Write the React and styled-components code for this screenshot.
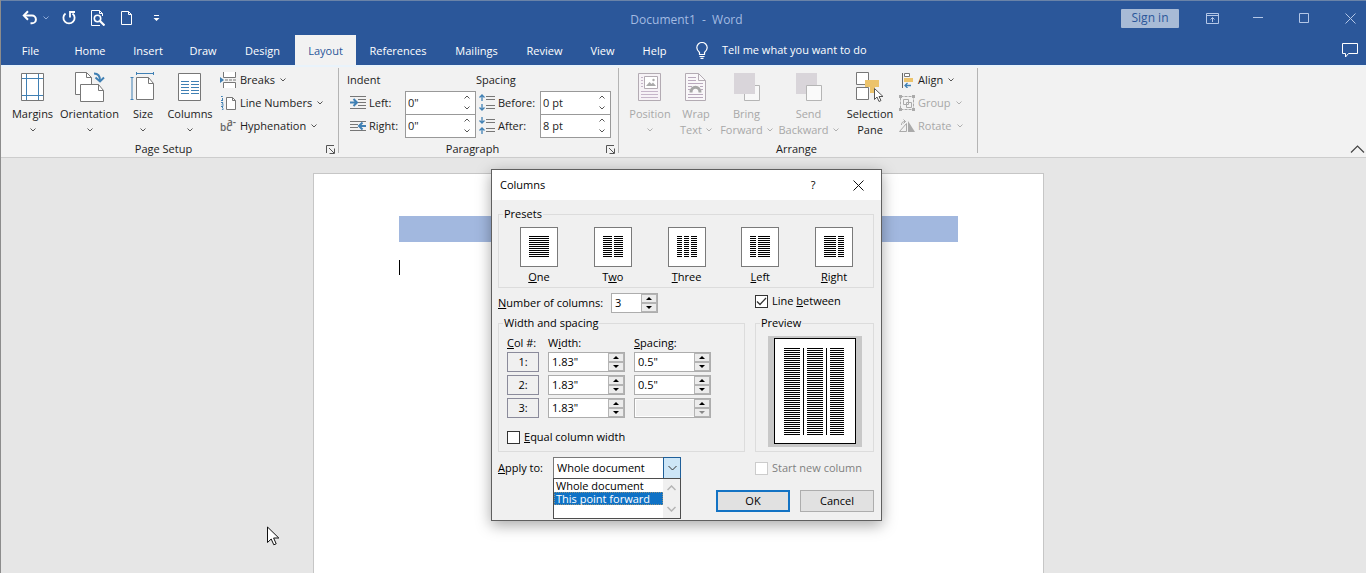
import React, { useState } from "react"
import styled, { createGlobalStyle, css } from "styled-components"

const GlobalStyle = createGlobalStyle`
  * {
    box-sizing: border-box;
  }
  body {
    margin: 0;
    overflow: hidden;
    font-family: "Open Sans", "Noto Sans", sans-serif;
    font-size: 11px;
    line-height: 16px;
    color: #1c1c1c;
  }
  button,
  input,
  select {
    font: inherit;
    color: inherit;
    margin: 0;
    padding: 0;
    border: 0;
    border-radius: 0;
    background: transparent;
  }
  svg {
    display: block;
    flex: none;
  }
`

/* ---------- icons ---------- */

const Chevron = ({ size = 6, color = "#555" }) => (
  <svg width={size} height="4" viewBox="0 0 6 4" fill="none" stroke={color}>
    <path d="M.5.5 3 3 5.5.5" />
  </svg>
)

const UndoIcon = () => (
  <svg width="16" height="16" viewBox="0 0 16 16" fill="none" stroke="#fff" strokeWidth="2">
    <path d="M2 5.500h8a3.800 3.800 0 0 1 0 7.800H8.500" />
    <path d="M6 1.200 1.800 5.500 6 9.800" />
  </svg>
)

const RedoIcon = () => (
  <svg width="16" height="16" viewBox="0 0 16 16" fill="none" stroke="#fff" strokeWidth="1.800">
    <path d="M4.500 3.500A5.600 5.600 0 1 0 11.500 3.500" />
    <path d="M9 7.500V2h5" />
  </svg>
)

const PreviewIcon = () => (
  <svg width="16" height="16" viewBox="0 0 16 16" fill="none" stroke="#fff">
    <path d="M11 15.500H2.500V.500h8l3 3V6M10.500.500v3h3" />
    <circle cx="8.500" cy="8.500" r="3.200" strokeWidth="1.600" />
    <path d="m11 11 4.500 4.500" strokeWidth="2.200" />
  </svg>
)

const NewIcon = () => (
  <svg width="16" height="16" viewBox="0 0 16 16" fill="none" stroke="#fff">
    <path d="M4.500 1.500h7l3 3v10h-10zM11.500 1.500v3h3" />
  </svg>
)

const CustomizeIcon = () => (
  <svg width="7" height="8" viewBox="0 0 7 8" fill="#fff">
    <path d="M1 1h5v1H1zM.500 4h6l-3 3z" />
  </svg>
)

const BulbIcon = () => (
  <svg width="12" height="17" viewBox="0 0 12 17" fill="none" stroke="#fff" strokeWidth="1.200">
    <path d="M3.500 12.500v-2C2 9 .800 7.800.800 5.700a5.200 5.200 0 0 1 10.400 0c0 2.100-1.200 3.300-2.700 4.800v2zM3.500 14.500h5M4.500 16.400h3" />
  </svg>
)

const CommentIcon = () => (
  <svg width="16" height="15" viewBox="0 0 16 15" fill="none" stroke="#fff">
    <path d="M.500.500h15v10H6.500l-3 3.500v-3.500h-3z" />
  </svg>
)

const RibbonIcon = () => (
  <svg width="13" height="11" viewBox="0 0 13 11" fill="none" stroke="#b4c7e7">
    <path d="M.500.500h12v10H.500zM.500 2.500h12M6.500 9V4.500M4.500 6.500l2-2 2 2" />
  </svg>
)

const WinGlyph = ({ d }) => (
  <svg width="11" height="11" viewBox="0 0 11 11" fill="none" stroke="#b4c7e7">
    <path d={d} />
  </svg>
)

const MarginsIcon = () => (
  <svg width="28" height="30" viewBox="0 0 28 30" fill="none">
    <path d="M2.500 1.500h22v27h-22z" fill="#fff" stroke="#777" />
    <path d="M7.500 2v26M19.500 2v26M3 6.500h21M3 23.500h21" stroke="#4080b4" />
  </svg>
)

const OrientationIcon = () => (
  <svg width="30" height="32" viewBox="0 0 30 32" fill="none">
    <path d="M.500.500h11l5 5v17H.500z" fill="#fff" stroke="#777" />
    <path d="M11.500.500v5h5" stroke="#777" />
    <path d="M5.500 12.500h18l5 6v11h-23z" fill="#fff" stroke="#777" />
    <path d="M23.500 12.500v6h5" stroke="#777" />
    <path d="M19 1.500c4 0 6 2 6 7" stroke="#4080b4" strokeWidth="2" />
    <path d="m20.500 5.500 4.500 4 4-4" stroke="#4080b4" strokeWidth="2" />
  </svg>
)

const SizeIcon = () => (
  <svg width="26" height="30" viewBox="0 0 26 30" fill="none">
    <path d="M6.500 5.500h12l5 6v16h-17z" fill="#fff" stroke="#777" />
    <path d="M18.500 5.500v6h5" stroke="#777" />
    <path d="M6.500 0v3M23.500 0v3M6.500 1.500h17M.500 5.500h3M.500 27.500h3M2 5.500v22" stroke="#4080b4" />
  </svg>
)

const ColumnsIcon = () => (
  <svg width="24" height="30" viewBox="0 0 24 30" fill="none">
    <path d="M.500 1.500h22v27H.500z" fill="#fff" stroke="#777" />
    <path
      d="M3 9.500h8M13 9.500h8M3 12.500h8M13 12.500h8M3 15.500h8M13 15.500h8M3 18.500h8M13 18.500h8M3 21.500h8M13 21.500h8"
      stroke="#4080b4"
    />
  </svg>
)

const BreaksIcon = () => (
  <svg width="17" height="16" viewBox="0 0 17 16" fill="none">
    <path d="M3.500 0v5.500h12V0M3.500 16v-5.500h12V16" fill="#fff" stroke="#777" />
    <path d="M5 8h3M9 8h3M13 8h3" stroke="#777" />
    <path d="m0 5 4 3-4 3z" fill="#4080b4" />
  </svg>
)

const LineNumbersIcon = () => (
  <svg width="17" height="16" viewBox="0 0 17 16" fill="none">
    <path d="M6.500 2.500h6l3 3v9h-9z" fill="#fff" stroke="#777" />
    <path d="M12.500 2.500v3h3" stroke="#777" />
    <path d="M1 1.500h1.500V5M1 5.500h3M1 7.500h2.500L1.500 10H4M1 11.500h2.500L2 13l1.500 1L1 15" stroke="#4080b4" strokeDasharray="2 1" />
  </svg>
)

const HyphenIcon = () => (
  <svg width="17" height="20" viewBox="0 0 17 20" fill="#666" fontSize="10" fontWeight="600">
    <text x="0" y="15">
      bc<tspan x="7" y="10">a-</tspan>
    </text>
  </svg>
)

const IndentIcon = ({ right }) => (
  <svg width="16" height="14" viewBox="0 0 16 14" fill="none">
    {right ? (
      <>
        <path d="M0 2.500h16M0 5.500h8M0 8.500h8M0 11.500h16" stroke="#777" />
        <path d="M9 7h7M12.500 3.500 9 7l3.500 3.500" stroke="#4080b4" strokeWidth="2" />
      </>
    ) : (
      <>
        <path d="M0 .500h16M8 3.500h8M8 6.500h8M8 9.500h8M0 12.500h16" stroke="#777" />
        <path d="M0 6.500h7M3.500 3 7 6.500 3.500 10" stroke="#4080b4" strokeWidth="2" />
      </>
    )}
  </svg>
)

const SpacingIcon = ({ after }) => (
  <svg width="16" height="17" viewBox="0 0 16 17" fill="none">
    <path d="M7 2.500h9M7 5.500h9M7 11.500h9M7 14.500h9" stroke="#777" />
    <path
      d={
        after
          ? "M3 0v6M.500 3.500 3 6l2.500-2.500M3 17v-6M.500 13.500 3 11l2.500 2.500"
          : "M3 7V1M.500 3.500 3 1l2.500 2.500M3 10v6M.500 13.500 3 16l2.500-2.500"
      }
      stroke="#4080b4"
      strokeWidth="1.300"
    />
  </svg>
)

const PositionIcon = () => (
  <svg width="24" height="30" viewBox="0 0 24 30" fill="none" stroke="#b3abb3">
    <path d="M.500 1.500h22v27H.500z" fill="#f6f2f6" />
    <path d="M6.500 4.500h13v12h-13z" fill="#fff" />
    <path d="M3 5.500h2M3 8.500h2M3 11.500h2M3 14.500h2M3 19.500h17M3 22.500h17M3 25.500h17" stroke="#c5b5c9" />
    <path d="m8 14 3.500-4 2 2 1.500-1.500L18 14z" fill="#aaa" stroke="none" />
    <circle cx="15.500" cy="8" r="1.200" fill="#aaa" stroke="none" />
  </svg>
)

const WrapIcon = () => (
  <svg width="22" height="30" viewBox="0 0 22 30" fill="none" stroke="#b3abb3">
    <path d="M.500 1.500h13l7 7v20H.500z" fill="#f9f7f9" />
    <path d="M13.500 1.500v7h7" />
    <path d="M3 5.500h8M3 8.500h8M3 11.500h15M3 14.500h4M15 14.500h3M3 17.500h2M16 17.500h2M3 22.500h15M3 25.500h15" stroke="#b9a9bd" />
    <path d="M6 20.500c0-7 9-7 9 0" stroke="#a6a6a6" strokeWidth="3" />
  </svg>
)

const StackIcon = ({ back }) => (
  <svg width="28" height="30" viewBox="0 0 28 30" fill="none">
    {!back && <path d="M11.500 13.500h15v15h-15z" fill="#f8f8f8" stroke="#b5b5b5" />}
    <path d="M1 1h21v21H1z" fill="#d9d5da" />
    {back && <path d="M11.500 13.500h15v15h-15z" fill="#fafafa" stroke="#b5b5b5" />}
  </svg>
)

const SelectionIcon = () => (
  <svg width="28" height="31" viewBox="0 0 28 31" fill="none">
    <path d="M.500.500h12v12H.500zM.500 15.500h12v12H.500z" fill="#fff" stroke="#777" />
    <path d="M9 8h14v7h-4v6h-5v-6H9z" fill="#ecc36b" />
    <path d="M18.500 16.500v11l2.500-2.500 2 4.500 2-1-2-4h4z" fill="#fff" stroke="#555" />
  </svg>
)

const AlignIcon = () => (
  <svg width="16" height="16" viewBox="0 0 16 16" fill="none">
    <path d="M3.500 1v15" stroke="#666" />
    <path d="M5.500 1.500h5v3h-5z" fill="#fff" stroke="#777" />
    <path d="M5 6h9v4H5z" fill="#ecc36b" />
    <path d="M6 13.500h6M8.500 11 6 13.500 8.500 16" stroke="#4080b4" strokeWidth="1.300" />
  </svg>
)

const GroupIcon = () => (
  <svg width="16" height="16" viewBox="0 0 16 16" fill="none" stroke="#aaa">
    <path d="M1.500 1.500h13v13h-13z" strokeDasharray="3 1" />
    <path d="M4.500 4.500h5v5h-5zM7.500 7.500h5v5h-5z" />
    <path d="M0 0h3v3H0zM13 0h3v3h-3zM0 13h3v3H0zM13 13h3v3h-3z" fill="#aaa" stroke="none" />
  </svg>
)

const RotateIcon = () => (
  <svg width="16" height="14" viewBox="0 0 16 14" fill="none" stroke="#aaa">
    <path d="M.500 12.500h7v-8z" />
    <path d="M9 13V2l7 11z" fill="#aaa" stroke="none" />
    <path d="M2.500 6c0-2.500 1-3.500 4-3.500M4.500.500l2 2-2 2" />
  </svg>
)

const LauncherIcon = () => (
  <svg width="9" height="9" viewBox="0 0 9 9" fill="none" stroke="#555">
    <path d="M.500 8V.500H8M3 3l5 5M8.500 3.500v5h-5" />
  </svg>
)

const PointerIcon = () => (
  <svg width="13" height="20" viewBox="0 0 13 20">
    <path d="M.500 1v15.500l3.700-3.500 2.600 5.800 2.400-1-2.600-5.800h5.200z" fill="#fff" stroke="#111" />
  </svg>
)

/* ---------- title bar and tabs ---------- */

const Window = styled.div`
  min-height: 100vh;
  display: flex;
  flex-direction: column;
  position: relative;
  border-left: 1px solid #8c8c8c;
  background: #e6e6e6;
`

const Header = styled.header`
  background: #2b579a;
  border-top: 1px solid #6a83a8;
`

const TitleBar = styled.div`
  height: 34px;
  display: grid;
  grid-template-columns: 1fr auto 1fr;
  align-items: center;
  padding-left: 6px;
`

const QuickAccess = styled.div`
  display: flex;
  align-items: center;
  gap: 12px;
  padding-left: 15px;
  > :last-child {
    margin-left: 8px;
  }
`

const IconButton = styled.button`
  display: flex;
  align-items: center;
  justify-content: center;
  gap: 5px;
`

const Title = styled.div`
  padding-top: 4px;
  font-size: 12px;
  color: #a3bbe2;
  white-space: pre;
`

const WindowControls = styled.div`
  display: flex;
  justify-content: flex-end;
  align-items: center;
  gap: 14px;
  height: 31px;
`

const SignIn = styled.button`
  width: 58px;
  height: 19px;
  margin-right: 3px;
  border-radius: 1px;
  background: #a8bbd6;
  color: #2b579a;
  font-size: 12px;
`

const WindowButton = styled(IconButton)`
  width: 32px;
  height: 31px;
`

const TabBar = styled.nav`
  height: 30px;
  display: flex;
  align-items: stretch;
  padding-right: 8px;
`

const Tab = styled.a`
  width: ${({ $width }) => $width}px;
  display: flex;
  align-items: center;
  justify-content: center;
  padding-top: 1px;
  text-decoration: none;
  color: ${({ $active }) => ($active ? "#2b579a" : "#fff")};
  background: ${({ $active }) => ($active ? "#f2f2f2" : "transparent")};
`

const TellMe = styled(IconButton)`
  gap: 14px;
  margin-left: 16px;
  color: #fff;
`

const CommentButton = styled(IconButton)`
  margin-left: auto;
`

/* ---------- ribbon ---------- */

const Ribbon = styled.section`
  display: flex;
  height: 93px;
  border-top: 2px solid #e9f3fb;
  border-bottom: 1px solid #cdcdcd;
  background: #f2f2f2;
`

const Group = styled.div`
  display: grid;
  grid-template-rows: minmax(0, 1fr) 8px;
  margin: 1px 0 4px;
  padding-left: ${({ $pad }) => $pad}px;
  width: ${({ $width }) => $width}px;
  border-right: 1px solid #b4b4b4;
`

const GroupBody = styled.div`
  display: flex;
  align-items: flex-start;
`

const GroupFooter = styled.div`
  align-self: center;
  display: flex;
  align-items: center;
  padding-right: 3px;
  margin-left: -${({ $pad }) => $pad}px;
`

const GroupName = styled.span`
  flex: 1;
  text-align: center;
`

const BigButton = styled.button`
  width: ${({ $width }) => $width}px;
  height: 71px;
  display: flex;
  flex-direction: column;
  align-items: center;
  color: ${({ disabled }) => (disabled ? "#a8a8a8" : "#1c1c1c")};
  white-space: nowrap;
`

const BigIcon = styled.span`
  height: 36px;
  padding-top: 4px;
  margin-bottom: 2px;
`

const SecondLine = styled.span`
  display: flex;
  align-items: center;
  gap: 4px;
  height: 16px;
`

const SmallList = styled.div`
  display: flex;
  flex-direction: column;
  padding-left: ${({ $pad }) => $pad}px;
`

const SmallButton = styled.button`
  display: flex;
  align-items: center;
  gap: 3px;
  height: 23px;
  color: ${({ disabled }) => (disabled ? "#a8a8a8" : "#1c1c1c")};
  white-space: nowrap;
  svg:last-child {
    margin-left: 2px;
  }
`

const FieldColumn = styled.div`
  display: flex;
  flex-direction: column;
`

const FieldHeading = styled.div`
  height: 23px;
  padding-top: 4px;
`

const Field = styled.div`
  display: flex;
  align-items: center;
  gap: 3px;
  height: 23px;
  padding-left: 3px;
`

const FieldLabel = styled.label`
  width: ${({ $width }) => $width}px;
  white-space: nowrap;
`

const RibbonSpin = styled.div`
  display: flex;
  width: 71px;
  height: 24px;
  border: 1px solid #999;
  background: #fff;
  input {
    flex: 1;
    min-width: 0;
    padding-left: 2px;
  }
`

const RibbonArrows = styled.div`
  display: flex;
  flex-direction: column;
  width: 16px;
  button {
    flex: 1;
    display: flex;
    align-items: center;
    justify-content: center;
  }
  button:first-child svg {
    transform: rotate(180deg);
  }
`

const Collapse = styled(IconButton)`
  margin-left: auto;
  align-self: flex-end;
  width: 17px;
  height: 17px;
`

/* ---------- document ---------- */

const Canvas = styled.main`
  flex: 1;
  display: flex;
  justify-content: center;
  padding: 15px 10px 0 0;
  overflow: hidden;
`

const Paper = styled.div`
  width: 731px;
  max-width: 100%;
  padding: 42px 85px 0;
  border: 1px solid #c6c6c6;
  border-bottom: 0;
  background: #fff;
`

const Band = styled.div`
  height: 26px;
  background: #a2b8df;
`

const Caret = styled.div`
  width: 1px;
  height: 15px;
  margin-top: 18px;
  background: #000;
`

const Pointer = styled.div`
  position: absolute;
  left: 266px;
  top: 526px;
`

/* ---------- dialog ---------- */

const Dialog = styled.div`
  position: absolute;
  top: 169px;
  left: 490px;
  width: 391px;
  border: 1px solid #5f5f5f;
  background: #f0f0f0;
  color: #000;
  box-shadow: 0 4px 14px rgba(0, 0, 0, 0.35);
`

const DialogTitle = styled.div`
  height: 30px;
  display: flex;
  align-items: center;
  padding: 0 14px 0 8px;
  background: #fff;
  button {
    width: 18px;
    height: 18px;
  }
  button:last-child {
    margin-left: 27px;
  }
`

const DialogName = styled.h1`
  margin: 0;
  flex: 1;
  font-size: 11px;
  font-weight: 400;
`

const DialogBody = styled.div`
  padding: 6px 7px 8px 6px;
`

const Box = styled.fieldset`
  margin: 0;
  min-width: 0;
  border: 1px solid #dcdcdc;
  padding: ${({ $padding }) => $padding};
  legend {
    margin-left: ${({ $indent }) => $indent}px;
    padding: 0 1px;
  }
`

const Presets = styled.div`
  display: flex;
  justify-content: space-between;
`

const Preset = styled.button`
  display: flex;
  flex-direction: column;
  align-items: center;
  gap: 2px;
  width: 38px;
`

const PresetFrame = styled.span`
  display: flex;
  align-items: center;
  justify-content: center;
  width: 38px;
  height: 40px;
  border: 1px solid #7a7a7a;
  background: #fff;
`

const Columns = styled.div`
  display: grid;
  grid-template-columns: 247px 1fr;
  column-gap: 10px;
  margin-top: ${({ $top }) => $top}px;
`

const Line = styled.div`
  display: flex;
  align-items: center;
`

const NumberLabel = styled.label`
  width: 113px;
  white-space: nowrap;
`

const Spin = styled.div`
  display: flex;
  width: ${({ $width }) => $width}px;
  height: 20px;
  border: 1px solid #adadad;
  background: #fff;
  input {
    flex: 1;
    min-width: 0;
    padding-left: 3px;
  }
  ${({ $off }) =>
    $off &&
    css`
      background: #f0f0f0;
      box-shadow: inset 0 0 0 1px #fff;
    `}
`

const Arrows = styled.div`
  display: flex;
  flex-direction: column;
  width: 16px;
  button {
    flex: 1;
    display: flex;
    align-items: center;
    justify-content: center;
    border: 1px solid #b4b4b4;
    background: #ececec;
  }
`

const ColumnGrid = styled.div`
  display: grid;
  grid-template-columns: 32px 77px 77px;
  column-gap: 9px;
  row-gap: 3px;
`

const ColumnHead = styled(ColumnGrid)`
  margin-bottom: 1px;
  white-space: nowrap;
`

const ColumnNumber = styled.div`
  height: 20px;
  border: 1px solid #8b8b9b;
  line-height: 18px;
  text-align: center;
`

const CheckLabel = styled.label`
  display: flex;
  align-items: center;
  gap: 4px;
  height: 16px;
  margin-top: ${({ $top }) => $top || 0}px;
  color: ${({ $off }) => ($off ? "#808080" : "inherit")};
  white-space: nowrap;
  input {
    appearance: none;
    flex: none;
    width: 13px;
    height: 13px;
    border: 1px solid #333;
    background: #fff;
  }
  input:disabled {
    border-color: #ccc;
  }
`

const CheckHolder = styled.span`
  display: grid;
  place-items: center;
  > * {
    grid-area: 1 / 1;
  }
  svg {
    z-index: 1;
    pointer-events: none;
  }
`

const PreviewFrame = styled.div`
  display: flex;
  justify-content: center;
  align-items: flex-start;
  width: 94px;
  height: 111px;
  padding-top: 2px;
  background: #c8c8c8;
`

const ApplyLabel = styled.label`
  width: 55px;
`

const Combo = styled.div`
  position: relative;
  display: flex;
  width: 128px;
  height: 22px;
  border: 1px solid #7a7a7a;
  background: #fff;
  select {
    appearance: none;
    flex: 1;
    min-width: 0;
    padding-left: 3px;
  }
`

const ComboArrow = styled.span`
  display: flex;
  align-items: center;
  justify-content: center;
  width: 18px;
  margin: -1px;
  border: 1px solid #1f5f99;
  background: #cde6f7;
`

const ComboList = styled.div`
  position: absolute;
  top: 20px;
  left: -1px;
  display: flex;
  width: 128px;
  height: 41px;
  border: 1px solid #4d4d4d;
  background: #fff;
  ul {
    flex: 1;
    margin: 0;
    padding: 0;
    list-style: none;
  }
`

const Option = styled.li`
  height: 13px;
  padding-left: 2px;
  line-height: 13px;
  white-space: nowrap;
  color: ${({ $selected }) => ($selected ? "#fff" : "#000")};
  background: ${({ $selected }) => ($selected ? "#0f72c6" : "transparent")};
  outline: ${({ $selected }) => ($selected ? "1px dotted #8a8f80" : "none")};
  outline-offset: -1px;
`

const ListScroll = styled.div`
  width: 17px;
  display: flex;
  flex-direction: column;
  justify-content: space-between;
  align-items: center;
  padding: 6px 0;
  background: #f0f0f0;
`

const Actions = styled.div`
  display: flex;
  justify-content: flex-end;
  gap: 10px;
  margin-top: 11px;
`

const Action = styled.button`
  width: 74px;
  height: 22px;
  border: ${({ $primary }) => ($primary ? "2px solid #1373c4" : "1px solid #adadad")};
  background: #e1e1e1;
`

/* ---------- data ---------- */

const tabs = [
  { label: "File", width: 59 },
  { label: "Home", width: 60 },
  { label: "Insert", width: 56 },
  { label: "Draw", width: 54 },
  { label: "Design", width: 65 },
  { label: "Layout", width: 61 },
  { label: "References", width: 84 },
  { label: "Mailings", width: 73 },
  { label: "Review", width: 63 },
  { label: "View", width: 53 },
  { label: "Help", width: 51 },
]

const pageSetup = [
  { label: "Margins", Icon: MarginsIcon, width: 51 },
  { label: "Orientation", Icon: OrientationIcon, width: 63 },
  { label: "Size", Icon: SizeIcon, width: 44 },
  { label: "Columns", Icon: ColumnsIcon, width: 50 },
]

const arrange = [
  { label: "Position", Icon: PositionIcon, width: 46, off: true, menu: true },
  { label: "Wrap", second: "Text", Icon: WrapIcon, width: 46, off: true, menu: true },
  { label: "Bring", second: "Forward", Icon: StackIcon, width: 55, off: true, menu: true },
  { label: "Send", second: "Backward", Icon: () => <StackIcon back />, width: 69, off: true, menu: true },
  { label: "Selection", second: "Pane", Icon: SelectionIcon, width: 54 },
]

const presets = [
  { first: "", key: "O", rest: "ne", bars: [[0, 20]] },
  { first: "T", key: "w", rest: "o", bars: [[0, 9], [11, 9]] },
  { first: "", key: "T", rest: "hree", bars: [[0, 5], [7, 5], [14, 6]] },
  { first: "", key: "L", rest: "eft", bars: [[0, 6], [8, 12]] },
  { first: "", key: "R", rest: "ight", bars: [[0, 12], [14, 6]] },
]

const rows = [
  { id: 1, width: '1.83"', spacing: '0.5"' },
  { id: 2, width: '1.83"', spacing: '0.5"' },
  { id: 3, width: '1.83"', spacing: "", off: true },
]

/* ---------- parts ---------- */

const Bars = ({ bars, lines, width, step }) => (
  <svg width={width} height={lines * step} shapeRendering="crispEdges">
    {bars.map(([x, w]) =>
      Array.from({ length: lines }, (_, i) => (
        <rect key={`${x}-${i}`} x={x} y={i * step} width={w} height="1" />
      ))
    )}
  </svg>
)

const PreviewPage = () => (
  <svg width="82" height="106" viewBox="0 0 82 106" shapeRendering="crispEdges">
    <rect x=".5" y=".5" width="81" height="105" fill="#fff" stroke="#000" />
    {[[10, 16], [33, 16], [56, 14]].map(([x, w]) =>
      Array.from({ length: 44 }, (_, i) => (
        <rect key={`${x}-${i}`} x={x} y={10 + i * 2} width={w} height="1" />
      ))
    )}
    <rect x="29" y="10" width="1" height="87" />
    <rect x="52" y="10" width="1" height="87" />
  </svg>
)

const RibbonField = ({ id, label, icon, labelWidth, value }) => (
  <Field>
    {icon}
    <FieldLabel htmlFor={id} $width={labelWidth}>{label}</FieldLabel>
    <RibbonSpin>
      <input id={id} defaultValue={value} />
      <RibbonArrows>
        <button aria-label="Increase"><Chevron size={8} /></button>
        <button aria-label="Decrease"><Chevron size={8} /></button>
      </RibbonArrows>
    </RibbonSpin>
  </Field>
)

const Spinner = ({ width, off, ...props }) => (
  <Spin $width={width} $off={off}>
    <input disabled={off} {...props} />
    <Arrows>
      <button disabled={off} aria-label="Increase">
        <svg width="6" height="3" viewBox="0 0 6 3"><path d="M0 3 3 0l3 3z" /></svg>
      </button>
      <button disabled={off} aria-label="Decrease">
        <svg width="6" height="3" viewBox="0 0 6 3" fill={off ? "#888" : "#000"}><path d="m0 0 3 3 3-3z" /></svg>
      </button>
    </Arrows>
  </Spin>
)

const Big = ({ label, second, Icon, width, off, menu = false }) => (
  <BigButton $width={width} disabled={off}>
    <BigIcon><Icon /></BigIcon>
    {label}
    <SecondLine>
      {second}
      {menu && <Chevron color={off ? "#b0b0b0" : "#555"} />}
    </SecondLine>
  </BigButton>
)

const Footer = ({ label, pad, launcher }) => (
  <GroupFooter $pad={pad}>
    <GroupName>{label}</GroupName>
    {launcher && <IconButton aria-label={`${label} settings`}><LauncherIcon /></IconButton>}
  </GroupFooter>
)

const ColumnsDialog = () => {
  const [lineBetween, setLineBetween] = useState(true)
  const [equal, setEqual] = useState(false)

  return (
    <Dialog role="dialog" aria-labelledby="dialog-name">
      <DialogTitle>
        <DialogName id="dialog-name">Columns</DialogName>
        <IconButton>?</IconButton>
        <IconButton aria-label="Close">
          <svg width="11" height="11" viewBox="0 0 11 11" stroke="#111"><path d="m.5.5 10 10M10.500.500l-10 10" /></svg>
        </IconButton>
      </DialogTitle>
      <DialogBody>
        <Box $indent={-17} $padding="5px 20px 2px 21px">
          <legend>Presets</legend>
          <Presets>
            {presets.map(({ first, key, rest, bars }) => (
              <Preset key={first + key}>
                <PresetFrame><Bars bars={bars} lines={11} width={20} step={2} /></PresetFrame>
                <span>{first}<u>{key}</u>{rest}</span>
              </Preset>
            ))}
          </Presets>
        </Box>

        <Columns $top={5}>
          <Line>
            <NumberLabel htmlFor="count"><u>N</u>umber of columns:</NumberLabel>
            <Spinner id="count" width={47} defaultValue="3" />
          </Line>
          <CheckLabel>
            <CheckHolder>
              <input type="checkbox" checked={lineBetween} onChange={(e) => setLineBetween(e.target.checked)} />
              {lineBetween && (
                <svg width="11" height="9" viewBox="0 0 11 9" fill="none" stroke="#333" strokeWidth="1.300"><path d="m1 4.500 3 3L10 1" /></svg>
              )}
            </CheckHolder>
            <span>Line <u>b</u>etween</span>
          </CheckLabel>
        </Columns>

        <Columns $top={2}>
          <Box $indent={-4} $padding="4px 8px 6px">
            <legend>Width and spacing</legend>
            <ColumnHead>
              <span><u>C</u>ol #:</span>
              <span>W<u>i</u>dth:</span>
              <span><u>S</u>pacing:</span>
            </ColumnHead>
            <ColumnGrid>
              {rows.map(({ id, width, spacing, off }) => (
                <React.Fragment key={id}>
                  <ColumnNumber>{id}:</ColumnNumber>
                  <Spinner width={77} aria-label={`Width ${id}`} defaultValue={width} />
                  <Spinner width={77} off={off} aria-label={`Spacing ${id}`} defaultValue={spacing} />
                </React.Fragment>
              ))}
            </ColumnGrid>
            <CheckLabel $top={11}>
              <input type="checkbox" checked={equal} onChange={(e) => setEqual(e.target.checked)} />
              <span><u>E</u>qual column width</span>
            </CheckLabel>
          </Box>
          <Box $indent={-8} $padding="5px 11px 4px 12px">
            <legend>Preview</legend>
            <PreviewFrame><PreviewPage /></PreviewFrame>
          </Box>
        </Columns>

        <Columns $top={5}>
          <Line>
            <ApplyLabel htmlFor="apply"><u>A</u>pply to:</ApplyLabel>
            <Combo>
              <select id="apply" defaultValue="Whole document">
                <option>Whole document</option>
                <option>This point forward</option>
              </select>
              <ComboArrow>
                <svg width="9" height="6" viewBox="0 0 9 6" fill="none" stroke="#333"><path d="m.500 1 4 4 4-4" /></svg>
              </ComboArrow>
              <ComboList>
                <ul role="listbox" aria-label="Apply to">
                  <Option role="option">Whole document</Option>
                  <Option role="option" aria-selected $selected>This point forward</Option>
                </ul>
                <ListScroll>
                  <svg width="9" height="6" viewBox="0 0 9 6" fill="none" stroke="#b5b5b5" strokeWidth="1.500"><path d="m.500 5 4-4 4 4" /></svg>
                  <svg width="9" height="6" viewBox="0 0 9 6" fill="none" stroke="#b5b5b5" strokeWidth="1.500"><path d="m.500 1 4 4 4-4" /></svg>
                </ListScroll>
              </ComboList>
            </Combo>
          </Line>
          <Line>
            <CheckLabel $off>
              <input type="checkbox" disabled />
              <span>Start new column</span>
            </CheckLabel>
          </Line>
        </Columns>

        <Actions>
          <Action $primary>OK</Action>
          <Action>Cancel</Action>
        </Actions>
      </DialogBody>
    </Dialog>
  )
}

const App = () => (
  <>
    <GlobalStyle />
    <Window>
      <Header>
        <TitleBar>
          <QuickAccess>
            <IconButton aria-label="Undo">
              <UndoIcon />
              <Chevron color="#8fabd8" />
            </IconButton>
            <IconButton aria-label="Redo"><RedoIcon /></IconButton>
            <IconButton aria-label="Print preview"><PreviewIcon /></IconButton>
            <IconButton aria-label="New"><NewIcon /></IconButton>
            <IconButton aria-label="Customize"><CustomizeIcon /></IconButton>
          </QuickAccess>
          <Title>Document1  -  Word</Title>
          <WindowControls>
            <SignIn>Sign in</SignIn>
            <WindowButton aria-label="Ribbon display options"><RibbonIcon /></WindowButton>
            <WindowButton aria-label="Minimize"><WinGlyph d="M0 4.500h10" /></WindowButton>
            <WindowButton aria-label="Maximize"><WinGlyph d="M.500.500h9v9H.500z" /></WindowButton>
            <WindowButton aria-label="Close"><WinGlyph d="m.500.500 10 10M10.500.500l-10 10" /></WindowButton>
          </WindowControls>
        </TitleBar>
        <TabBar>
          {tabs.map(({ label, width }) => (
            <Tab key={label} href={`#${label.toLowerCase()}`} $width={width} $active={label === "Layout"}>
              {label}
            </Tab>
          ))}
          <TellMe>
            <BulbIcon />
            Tell me what you want to do
          </TellMe>
          <CommentButton aria-label="Comments"><CommentIcon /></CommentButton>
        </TabBar>
      </Header>

      <Ribbon>
        <Group $width={338} $pad={6}>
          <GroupBody>
            {pageSetup.map((item) => (
              <Big key={item.label} {...item} menu />
            ))}
            <SmallList $pad={5}>
              <SmallButton><BreaksIcon />Breaks<Chevron /></SmallButton>
              <SmallButton><LineNumbersIcon />Line Numbers<Chevron /></SmallButton>
              <SmallButton><HyphenIcon />Hyphenation<Chevron /></SmallButton>
            </SmallList>
          </GroupBody>
          <Footer label="Page Setup" pad={6} launcher />
        </Group>

        <Group $width={280} $pad={8}>
          <GroupBody>
            <FieldColumn>
              <FieldHeading>Indent</FieldHeading>
              <RibbonField id="left" label="Left:" icon={<IndentIcon />} labelWidth={33} value={'0"'} />
              <RibbonField id="right" label="Right:" icon={<IndentIcon right />} labelWidth={33} value={'0"'} />
            </FieldColumn>
            <FieldColumn>
              <FieldHeading>Spacing</FieldHeading>
              <RibbonField id="before" label="Before:" icon={<SpacingIcon />} labelWidth={39} value="0 pt" />
              <RibbonField id="after" label="After:" icon={<SpacingIcon after />} labelWidth={39} value="8 pt" />
            </FieldColumn>
          </GroupBody>
          <Footer label="Paragraph" pad={8} launcher />
        </Group>

        <Group $width={359} $pad={8}>
          <GroupBody>
            {arrange.map((item) => (
              <Big key={item.label} {...item} />
            ))}
            <SmallList $pad={2}>
              <SmallButton><AlignIcon />Align<Chevron /></SmallButton>
              <SmallButton disabled><GroupIcon />Group<Chevron color="#b0b0b0" /></SmallButton>
              <SmallButton disabled><RotateIcon />Rotate<Chevron color="#b0b0b0" /></SmallButton>
            </SmallList>
          </GroupBody>
          <Footer label="Arrange" pad={8} />
        </Group>

        <Collapse aria-label="Collapse the ribbon">
          <svg width="15" height="8" viewBox="0 0 15 8" fill="none" stroke="#444" strokeWidth="1.200"><path d="m1 7.500 6.500-6.500 6.500 6.500" /></svg>
        </Collapse>
      </Ribbon>

      <Canvas>
        <Paper>
          <Band />
          <Caret />
        </Paper>
      </Canvas>

      <Pointer><PointerIcon /></Pointer>
      <ColumnsDialog />
    </Window>
  </>
)

export default App
